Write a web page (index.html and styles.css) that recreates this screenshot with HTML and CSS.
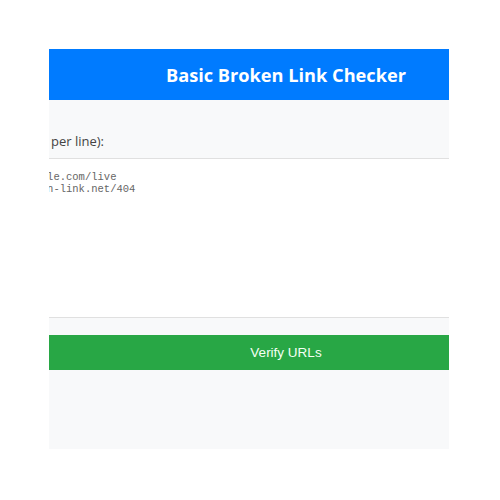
FILE: index.html
```html
<!DOCTYPE html>
<html>
<head>
<meta charset="utf-8">
<link rel="stylesheet" href="styles.css">
</head>
<body>
<div class="viewport">
  <div class="app">
    <header class="header">Basic Broken Link Checker</header>
    <main class="main">
      <label class="label" for="urls">Enter URLs (one per line):</label>
      <textarea id="urls" class="urls">https://www.example.com/live
https://www.broken-link.net/404</textarea>
      <button class="verify">Verify URLs</button>
    </main>
  </div>
</div>
</body>
</html>
```
FILE: styles.css
```css
html, body {
  margin: 0;
  padding: 0;
  background: #ffffff;
}
.viewport {
  margin: 49px 0 0 49px;
  width: 400px;
  height: 400px;
  overflow: hidden;
  background: #f8f9fa;
}
.app {
  margin-left: -137px;
  width: 748px;
}
.header {
  height: 51px;
  background: #007bff;
  color: #ffffff;
  font-family: "Open Sans", "Noto Sans", sans-serif;
  font-weight: 700;
  font-size: 18.2px;
  display: flex;
  align-items: center;
  justify-content: center;
}
.main {
  display: flex;
  flex-direction: column;
  padding: 31px 20px 0;
}
.label {
  font-family: "Open Sans", "Noto Sans", sans-serif;
  font-size: 13px;
  line-height: 20px;
  color: #444;
  padding-left: 19px;
  margin-bottom: 7px;
}
.urls {
  box-sizing: border-box;
  height: 160px;
  border: 1px solid #e0e0e0;
  background: #ffffff;
  padding: 12px 10px 10px 7px;
  font-family: "Liberation Mono", "DejaVu Sans Mono", monospace;
  font-size: 10.5px;
  line-height: 12px;
  color: #666;
  resize: none;
  margin: 0;
}
.verify {
  margin-top: 17px;
  height: 35px;
  border: none;
  background: #28a745;
  color: #f4fff4;
  font-family: "Liberation Sans", Arial, sans-serif;
  font-size: 13.5px;
}
```
